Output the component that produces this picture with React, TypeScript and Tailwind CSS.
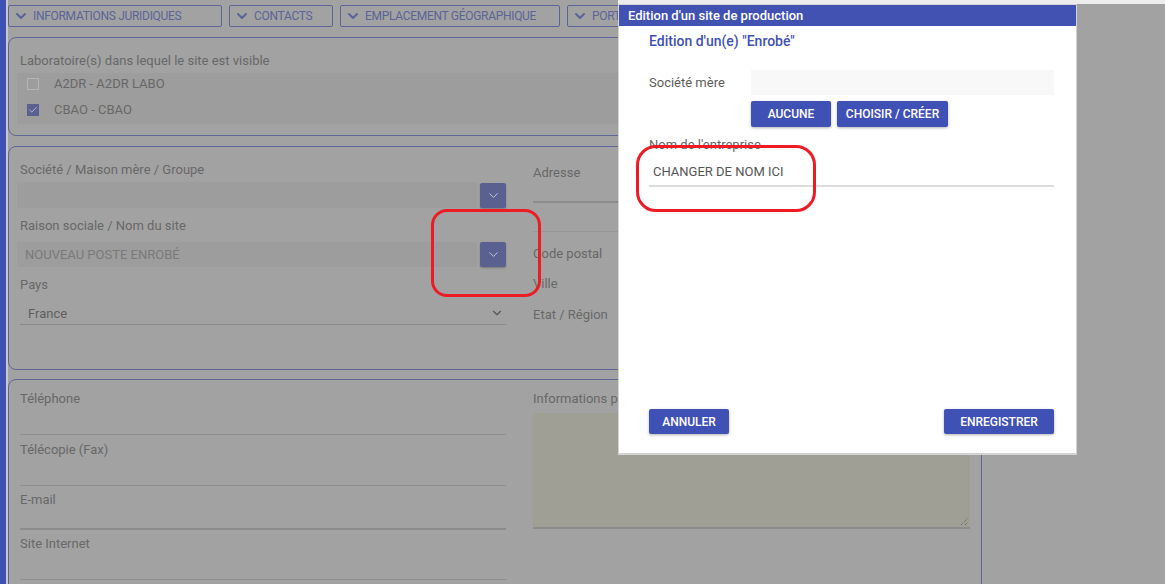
import { ChevronDown, Check } from "lucide-react";

const tabs = [
  { label: "INFORMATIONS JURIDIQUES", w: "w-[214px]" },
  { label: "CONTACTS", w: "w-[104px]" },
  { label: "EMPLACEMENT GÉOGRAPHIQUE", w: "w-[220px]" },
  { label: "PORTAIL", w: "w-[53px]" },
];

function PickButton() {
  return (
    <div className="flex h-[25px] w-[26px] shrink-0 items-center justify-center rounded-[2px] bg-[#5a6190] shadow-[0_1px_2px_rgba(0,0,0,0.25)]">
      <ChevronDown size={15} strokeWidth={1.6} className="text-[#c3c6d8]" />
    </div>
  );
}

export default function App() {
  return (
    <div className="relative h-[584px] w-[1165px] overflow-hidden bg-[#a2a2a2] font-['Roboto',sans-serif] text-[13px] leading-4 text-[#686868]">
      <div className="flex h-full">
        <div className="w-[6px] shrink-0 bg-[#3f51b5]" />
        <div className="w-[2px] shrink-0 bg-[#c9c9c9]" />

        <div className="w-[974px] shrink-0 pt-[5px]">
          {/* tabs */}
          <div className="flex gap-[7px] overflow-hidden">
            {tabs.map((t) => (
              <div
                key={t.label}
                className={`flex h-[22px] shrink-0 items-center gap-[4px] overflow-hidden whitespace-nowrap rounded-[2px] border border-[#5c6596] pl-[4px] text-[12px] tracking-[-0.3px] text-[#5b6499] ${t.w}`}
              >
                <ChevronDown size={16} strokeWidth={3} className="shrink-0" />
                {t.label}
              </div>
            ))}
          </div>

          {/* laboratoires */}
          <div className="mt-[10px] h-[99px] rounded-[8px] border border-[#5e6696] px-[11px] pt-[15px]">
            <div>Laboratoire(s) dans lequel le site est visible</div>
            <div className="-ml-[3px] mt-[4px] flex h-[51px] flex-col gap-[4px] bg-[#9d9d9d] pl-[10px]">
              <div className="flex h-[22px] items-center gap-[15px]">
                <span className="h-[12px] w-[12px] border border-[#b4b4b4]" />
                <span>A2DR - A2DR LABO</span>
              </div>
              <div className="flex h-[22px] items-center gap-[15px]">
                <span className="flex h-[12px] w-[12px] items-center justify-center bg-[#5a6190]">
                  <Check size={10} strokeWidth={2} className="text-[#c5c8d8]" />
                </span>
                <span>CBAO - CBAO</span>
              </div>
            </div>
          </div>

          {/* société / adresse */}
          <div className="mt-[10px] grid h-[224px] grid-cols-[486px_437px] gap-x-[27px] rounded-[8px] border border-[#5e6696] px-[11px]">
            <div className="pt-[15px]">
              <div>Société / Maison mère / Groupe</div>
              <div className="-ml-[3px] mt-[4px] flex h-[26px] items-end gap-[3px]">
                <div className="h-[26px] flex-1 bg-[#9d9d9d]" />
                <PickButton />
              </div>
              <div className="mt-[10px]">Raison sociale / Nom du site</div>
              <div className="-ml-[3px] mt-[8px] flex h-[25px] items-center gap-[3px]">
                <div className="flex h-[25px] flex-1 items-center bg-[#9d9d9d] pl-[8px] text-[#7a7a7a]">
                  NOUVEAU POSTE ENROBÉ
                </div>
                <PickButton />
              </div>
              <div className="mt-[10px]">Pays</div>
              <div className="flex h-[32px] items-end justify-between border-b border-[#8a8a8a] pb-[2px] pl-[8px] pr-[2px]">
                <span className="text-[#5f5f5f]">France</span>
                <ChevronDown size={14} strokeWidth={2} className="mb-[2px] text-[#555]" />
              </div>
            </div>
            <div className="pt-[18px]">
              <div>Adresse</div>
              <div className="h-[22px] border-b-2 border-[#8c8c8c]" />
              <div className="h-[29px] border-b border-[#969696]" />
              <div className="mt-[14px]">Code postal</div>
              <div className="mt-[14px]">Ville</div>
              <div className="mt-[15px]">Etat / Région</div>
            </div>
          </div>

          {/* contacts */}
          <div className="mt-[9px] grid h-[260px] grid-cols-[486px_437px] gap-x-[27px] rounded-[8px] border border-[#5e6696] px-[11px]">
            <div className="pt-[11px]">
              <div>Téléphone</div>
              <div className="h-[28px] border-b border-[#8e8e8e]" />
              <div className="mt-[7px]">Télécopie (Fax)</div>
              <div className="h-[28px] border-b border-[#8e8e8e]" />
              <div className="mt-[6px]">E-mail</div>
              <div className="h-[22px] border-b-2 border-[#8c8c8c]" />
              <div className="mt-[6px]">Site Internet</div>
              <div className="h-[28px] border-b border-[#8e8e8e]" />
            </div>
            <div className="pt-[11px]">
              <div>Informations pratiques</div>
              <div className="mt-[6px] flex h-[116px] items-end justify-end border-b-2 border-[#8c8c8c] bg-[#a09f96] p-[1px]">
                <svg width="9" height="9" viewBox="0 0 9 9" className="text-[#5a5a5a]">
                  <path d="M1 8 L8 1 M5 8 L8 5" stroke="currentColor" strokeWidth="1" strokeDasharray="1 1" />
                </svg>
              </div>
            </div>
          </div>
        </div>
      </div>

      {/* strip above the dialog */}
      <div className="absolute left-[618px] right-0 top-0 h-[4px] bg-[#ececec]" />

      {/* dialog */}
      <div className="absolute left-[618px] top-[4px] flex h-[451px] w-[459px] flex-col border border-b-2 border-[#d3d3d3] bg-white">
        <div className="flex h-[21px] items-center bg-[#4152b3] pl-[9px] text-[13px] font-medium text-white">
          Edition d'un site de production
        </div>
        <div className="flex flex-1 flex-col pl-[30px] pr-[22px]">
          <div className="mt-[6px] text-[14px] font-medium leading-[18px] text-[#3f51b5]">
            Edition d'un(e) "Enrobé"
          </div>
          <div className="mt-[20px] flex items-center">
            <span className="w-[102px] text-[#5c5c5c]">Société mère</span>
            <div className="h-[25px] flex-1 bg-[#f8f8f8]" />
          </div>
          <div className="mt-[6px] flex gap-[6px] pl-[102px]">
            <button className="h-[26px] w-[80px] rounded-[2px] bg-[#4051b5] text-[12px] font-medium text-white shadow-[0_1px_3px_rgba(0,0,0,0.3)]">
              AUCUNE
            </button>
            <button className="h-[26px] w-[111px] rounded-[2px] bg-[#4051b5] text-[12px] font-medium text-white shadow-[0_1px_3px_rgba(0,0,0,0.3)]">
              CHOISIR / CRÉER
            </button>
          </div>
          <div className="mt-[10px] text-[#666]">Nom de l'entreprise</div>
          <div className="flex h-[34px] items-end border-b-2 border-[#dcdcdc] pb-[5px] pl-[4px] text-[#555]">
            CHANGER DE NOM ICI
          </div>
          <div className="mt-auto flex justify-between pb-[19px]">
            <button className="h-[25px] w-[80px] rounded-[2px] bg-[#4051b5] text-[12px] font-medium text-white shadow-[0_1px_3px_rgba(0,0,0,0.3)]">
              ANNULER
            </button>
            <button className="h-[25px] w-[110px] rounded-[2px] bg-[#4051b5] text-[12px] font-medium text-white shadow-[0_1px_3px_rgba(0,0,0,0.3)]">
              ENREGISTRER
            </button>
          </div>
        </div>
      </div>

      {/* red annotations */}
      <div className="absolute left-[431px] top-[209px] h-[88px] w-[110px] rounded-[16px] border-[3px] border-[#ed1c24]" />
      <div className="absolute left-[636px] top-[145px] h-[67px] w-[180px] rounded-[20px] border-[3px] border-[#ed1c24]" />
    </div>
  );
}
